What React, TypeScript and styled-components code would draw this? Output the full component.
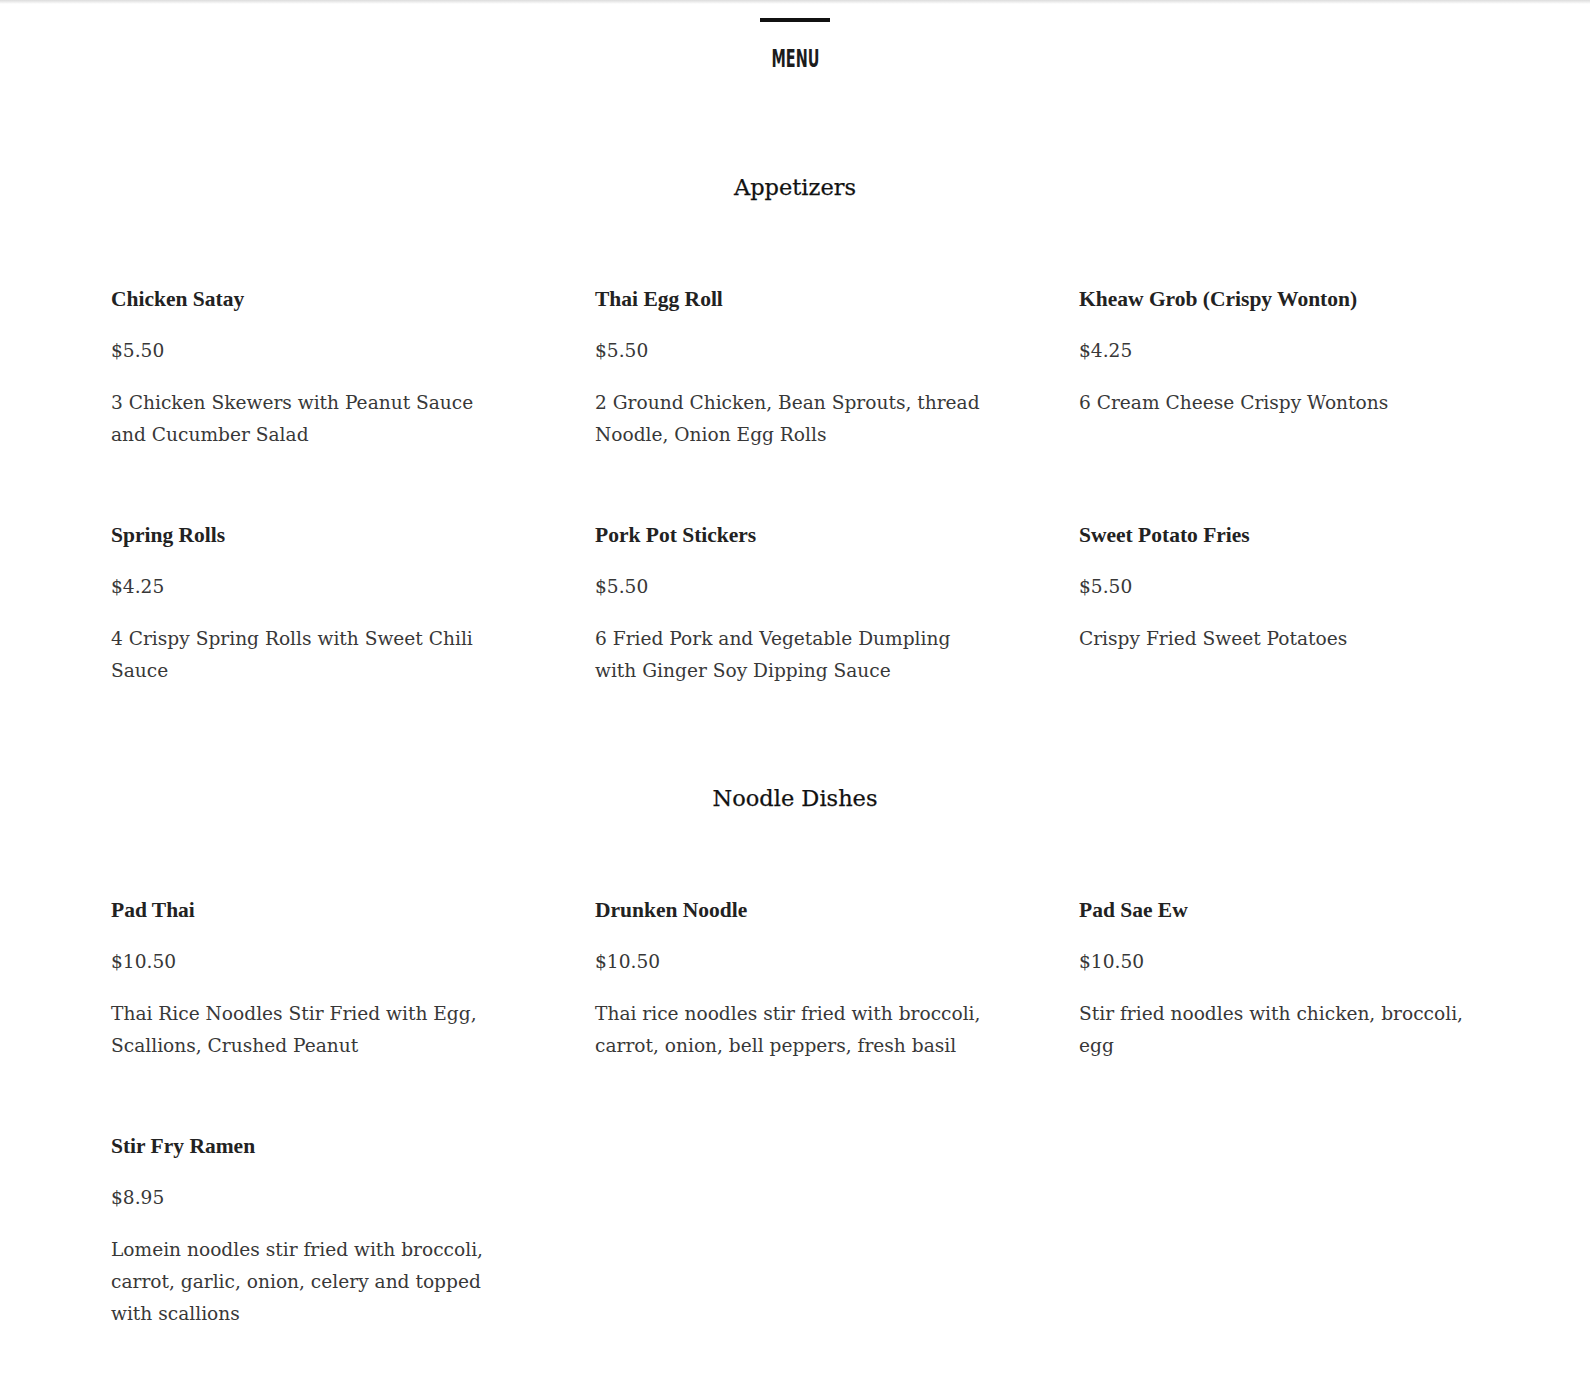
import React from 'react';
import styled, { createGlobalStyle } from 'styled-components';

interface MenuItem {
  name: string;
  price: string;
  description: string;
}

interface MenuSection {
  title: string;
  items: MenuItem[];
}

const sections: MenuSection[] = [
  {
    title: 'Appetizers',
    items: [
      { name: 'Chicken Satay', price: '$5.50', description: '3 Chicken Skewers with Peanut Sauce and Cucumber Salad' },
      { name: 'Thai Egg Roll', price: '$5.50', description: '2 Ground Chicken, Bean Sprouts, thread Noodle, Onion Egg Rolls' },
      { name: 'Kheaw Grob (Crispy Wonton)', price: '$4.25', description: '6 Cream Cheese Crispy Wontons' },
      { name: 'Spring Rolls', price: '$4.25', description: '4 Crispy Spring Rolls with Sweet Chili Sauce' },
      { name: 'Pork Pot Stickers', price: '$5.50', description: '6 Fried Pork and Vegetable Dumpling with Ginger Soy Dipping Sauce' },
      { name: 'Sweet Potato Fries', price: '$5.50', description: 'Crispy Fried Sweet Potatoes' },
    ],
  },
  {
    title: 'Noodle Dishes',
    items: [
      { name: 'Pad Thai', price: '$10.50', description: 'Thai Rice Noodles Stir Fried with Egg, Scallions, Crushed Peanut' },
      { name: 'Drunken Noodle', price: '$10.50', description: 'Thai rice noodles stir fried with broccoli, carrot, onion, bell peppers, fresh basil' },
      { name: 'Pad Sae Ew', price: '$10.50', description: 'Stir fried noodles with chicken, broccoli, egg' },
      { name: 'Stir Fry Ramen', price: '$8.95', description: 'Lomein noodles stir fried with broccoli, carrot, garlic, onion, celery and topped with scallions' },
    ],
  },
];

const GlobalStyle = createGlobalStyle`
  body {
    margin: 0;
    background: #ffffff;
    font-family: "DejaVu Serif", "Liberation Serif", serif;
    color: #222;
  }
`;

const Page = styled.div`
  position: relative;
  padding: 18px 111px 60px;
`;

const TopShade = styled.div`
  position: absolute;
  top: 0;
  left: 0;
  right: 0;
  height: 4px;
  background: linear-gradient(to bottom, #dcdcdc, rgba(255, 255, 255, 0));
`;

const Header = styled.header`
  display: flex;
  flex-direction: column;
  align-items: center;
`;

const Rule = styled.div`
  width: 70px;
  height: 4px;
  background: #111;
`;

const PageTitle = styled.h1`
  margin: 22px 0 0;
  font-family: "Liberation Sans Narrow", "DejaVu Sans Condensed", "Liberation Sans", sans-serif;
  font-weight: 700;
  font-size: 25px;
  line-height: 30px;
  color: #1c1c1c;
  transform: scaleX(0.64);
`;

const Section = styled.section`
  margin-top: 93px;

  & + & {
    margin-top: 91px;
  }
`;

const SectionTitle = styled.h2`
  margin: 0 0 76px;
  text-align: center;
  font-weight: 400;
  font-size: 22.5px;
  line-height: 40px;
  color: #111;
  -webkit-text-stroke: 0.25px #111;
`;

const Grid = styled.div`
  display: grid;
  grid-template-columns: repeat(3, 390px);
  column-gap: 94px;
  row-gap: 68px;
`;

const Item = styled.div`
  display: flex;
  flex-direction: column;
  gap: 20px;
`;

const ItemName = styled.div`
  font-family: "Liberation Serif", serif;
  font-weight: 700;
  font-size: 21.5px;
  line-height: 32px;
  color: #222;
`;

const Price = styled.div`
  font-size: 18.6px;
  line-height: 32px;
  color: #383838;
`;

const Description = styled.div`
  font-size: 18.6px;
  line-height: 32px;
  color: #383838;
`;

export default function App() {
  return (
    <Page>
      <GlobalStyle />
      <TopShade />
      <Header>
        <Rule />
        <PageTitle>MENU</PageTitle>
      </Header>
      {sections.map(section => (
        <Section key={section.title}>
          <SectionTitle>{section.title}</SectionTitle>
          <Grid>
            {section.items.map(item => (
              <Item key={item.name}>
                <ItemName>{item.name}</ItemName>
                <Price>{item.price}</Price>
                <Description>{item.description}</Description>
              </Item>
            ))}
          </Grid>
        </Section>
      ))}
    </Page>
  );
}
